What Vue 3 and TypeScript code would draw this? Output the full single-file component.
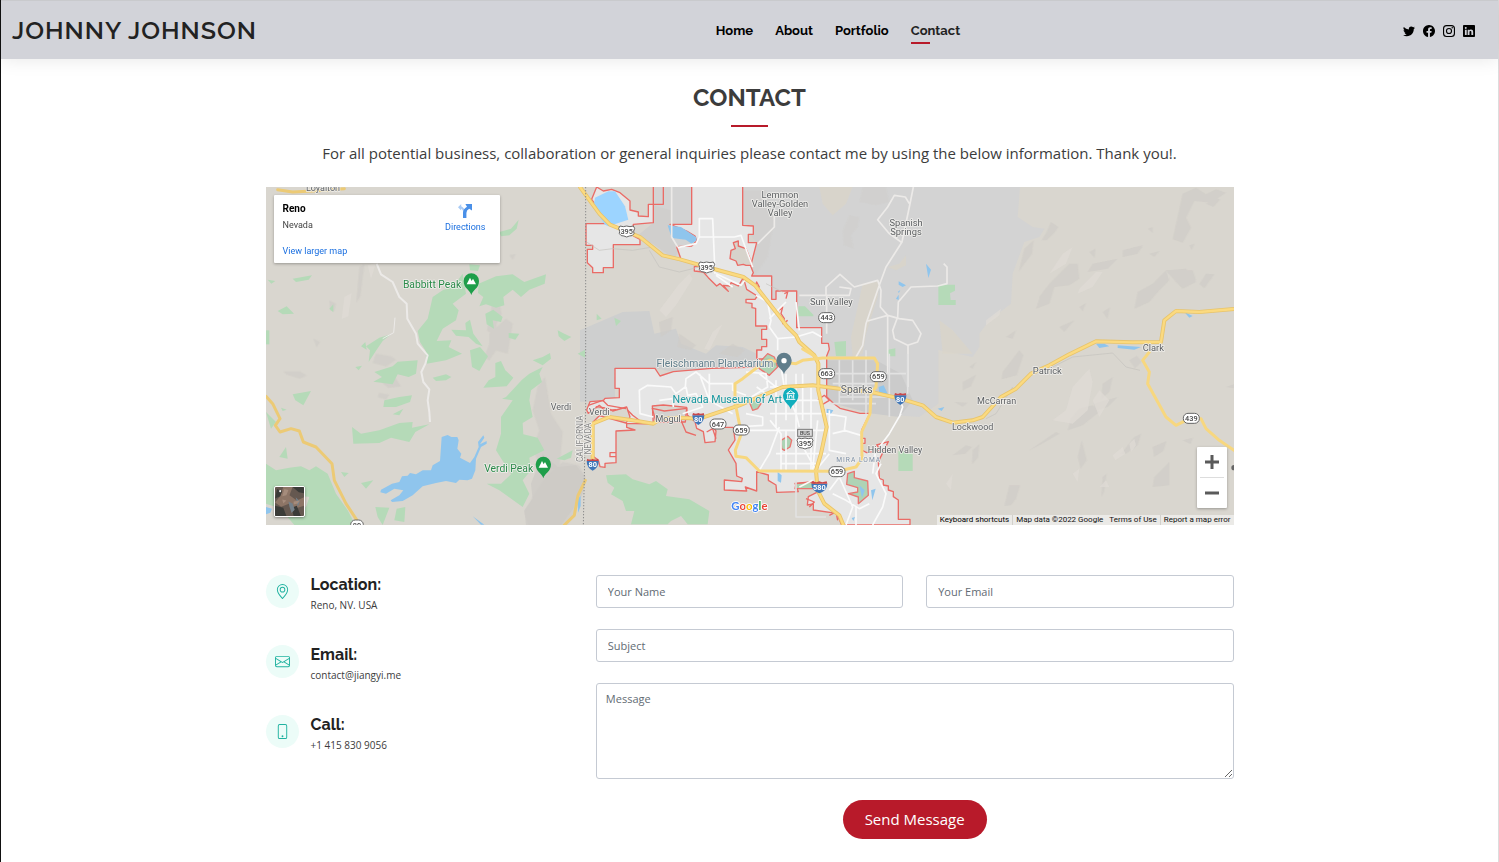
<script setup lang="ts">
import { ref } from 'vue'

interface Label { text: string; x: number; y: number; size: number; kind: string; turn?: number }
interface Shield { text: string; x: number; y: number; w: number }

const nav = ['Home', 'About', 'Portfolio', 'Contact']
const active = ref('Contact')

const form = ref({ name: '', email: '', subject: '', message: '' })

const labels: Label[] = [
  { text: 'Loyalton', x: 171, y: 13, size: 27, kind: 'town' },
  { text: 'Babbitt Peak', x: 498, y: 303, size: 31, kind: 'park' },
  { text: 'Verdi Peak', x: 728, y: 854, size: 31, kind: 'park' },
  { text: 'Verdi', x: 885, y: 670, size: 27, kind: 'town' },
  { text: 'Verdi', x: 1000, y: 684, size: 27, kind: 'town' },
  { text: 'Mogul', x: 1206, y: 704, size: 27, kind: 'town' },
  { text: 'CALIFORNIA', x: 951, y: 755, size: 25, kind: 'state', turn: -90 },
  { text: 'NEVADA', x: 976, y: 755, size: 25, kind: 'state', turn: -90 },
  { text: 'Fleischmann Planetarium', x: 1347, y: 541, size: 31, kind: 'poi' },
  { text: 'Nevada Museum of Art', x: 1384, y: 648, size: 32, kind: 'museum' },
  { text: 'Lemmon', x: 1542, y: 34, size: 28, kind: 'town' },
  { text: 'Valley-Golden', x: 1542, y: 60, size: 28, kind: 'town' },
  { text: 'Valley', x: 1542, y: 87, size: 28, kind: 'town' },
  { text: 'Spanish', x: 1920, y: 117, size: 28, kind: 'town' },
  { text: 'Springs', x: 1920, y: 144, size: 28, kind: 'town' },
  { text: 'Sun Valley', x: 1696, y: 354, size: 28, kind: 'town' },
  { text: 'Clark', x: 2662, y: 492, size: 28, kind: 'town' },
  { text: 'Sparks', x: 1772, y: 618, size: 31, kind: 'town' },
  { text: 'Hidden Valley', x: 1887, y: 798, size: 27, kind: 'town' },
  { text: 'MIRA LOMA', x: 1778, y: 824, size: 20, kind: 'district' },
  { text: 'Lockwood', x: 2120, y: 729, size: 27, kind: 'town' },
  { text: 'McCarran', x: 2192, y: 650, size: 27, kind: 'town' },
  { text: 'Patrick', x: 2344, y: 562, size: 28, kind: 'town' },
]

const stateRoutes: Shield[] = [
  { text: '443', x: 1682, y: 392, w: 48 },
  { text: '663', x: 1682, y: 560, w: 48 },
  { text: '659', x: 1837, y: 569, w: 48 },
  { text: '659', x: 1713, y: 854, w: 48 },
  { text: '659', x: 1426, y: 729, w: 48 },
  { text: '647', x: 1356, y: 711, w: 48 },
  { text: '439', x: 2776, y: 694, w: 48 },
  { text: '89', x: 273, y: 1014, w: 38 },
]
const usRoutes: Shield[] = [
  { text: '395', x: 1082, y: 133, w: 46 },
  { text: '395', x: 1322, y: 241, w: 46 },
  { text: '395', x: 1617, y: 769, w: 46 },
]
const interstates: Shield[] = [
  { text: '80', x: 1297, y: 695, w: 36 },
  { text: '80', x: 980, y: 832, w: 36 },
  { text: '80', x: 1903, y: 635, w: 36 },
  { text: '580', x: 1660, y: 900, w: 48 },
]

const woods = [
  '80,275 138,265 128,278 90,285',
  '35,372 62,358 84,380 50,382',
  '5,278 28,282 16,290',
  '190,365 202,352 202,376',
  '0,430 10,430 10,472 0,472',
  '610,232 642,235 636,252 612,250',
  '705,148 700,135 735,125 758,98 752,125 730,145',
  '590,260 560,300 530,310 500,330 485,395 455,432 462,465 478,490 482,530 540,520 588,500 548,480 556,460 512,462 530,425 570,400 578,370 560,350 600,320',
  '638,290 690,268 740,262 775,285 840,262 836,290 790,308 765,330 740,308 712,330 715,355 690,362 660,352 640,358 652,330 636,318',
  '658,380 682,368 710,390 705,405 680,400 684,425 662,412',
  '556,428 600,430 598,408 612,398 622,440 650,478 630,470 608,450 570,446',
  '728,438 760,440 748,458 728,452',
  '612,490 642,480 666,508 640,552 618,540',
  '688,528 705,522 718,550 742,572 722,598 652,602 668,580 688,570',
  '300,478 340,452 375,442 350,462 332,488 308,525 312,490',
  '285,478 298,465 302,488',
  '325,555 380,538 395,524 455,520 450,560 428,570 395,562 380,592 322,584 348,570',
  '500,572 540,562 556,570 540,580 510,582',
  '268,540 288,536 278,550',
  '355,640 400,630 438,625 432,645 390,660 352,660',
  '80,622 135,612 112,655 88,640',
  '45,662 62,668 50,672',
  '380,682 412,665 400,685',
  '258,720 285,740 340,730 400,708 440,705 438,722 490,712 448,735 430,765 375,752 340,768 262,770',
  '720,630 768,578 790,560 830,540 820,560 828,585 795,610 790,640 800,690 770,708 772,742 815,752 835,790 790,812 795,850 770,880 790,920 770,960 700,910 662,890 705,890 735,862 690,790 705,740 705,690 740,640 708,635',
  '800,520 830,510 852,498 855,515 830,535',
  '875,430 895,440 916,450 895,462 878,448',
  '935,500 957,488 957,512',
  '872,815 920,790 915,812 895,820',
  '0,830 30,850 70,842 105,838 130,850 150,838 185,860 210,920 245,970 268,1014 85,1014 60,985 120,960 130,930 60,920 30,960 0,950',
  '40,810 60,780 65,815',
  '225,855 248,858 235,870',
  '285,888 322,880 300,905',
  '328,960 370,962 350,1014 335,990',
  '392,965 418,960 415,1005 385,1000',
  '0,675 30,705 15,725',
]

const cityMain =
  'M1277 0V112H1212L1262 132 1287 147 1292 162 1277 177 1232 179 1245 217 1299 233V239H1285V252L1312 255 1327 272 1352 297 1362 290 1387 313 1372 295 1392 297 1395 287 1417 297 1432 272 1442 307 1474 327 1467 337H1440V347L1458 349 1458 362 1469 364V417H1502V427H1487V457H1502V479H1487V489H1472V540L1337 544 1222 554 1182 567 1167 544H1047V604H1060V632L1017 634 1012 641 972 644 962 669 967 679 992 659 1027 664 1040 672 1082 660 1092 690 1080 708 1000 686 982 704V809L997 819 1002 839 1017 841V829L1050 827V797H1032V809H1050V732L1107 729 1082 721V709L1162 711 1159 657 1192 654 1262 661 1264 684 1287 704 1292 724 1312 734 1317 767 1347 764 1350 732 1342 721 1402 721 1407 759 1387 789 1410 829 1412 867 1429 874 1427 884 1375 879V909L1442 912 1438 900 1472 912V854L1507 864V880L1530 894 1532 916 1597 914 1587 889 1642 884 1657 914 1627 929 1624 954 1642 951V969L1712 979 1727 1014H1932V997H1897V939L1882 929V914L1867 909V897L1852 894V879L1840 874 1837 824 1867 764 1832 774 1845 790 1802 797 1787 789V769H1797V754H1787V729L1812 679H1782L1722 664 1702 649 1682 629V507L1690 487 1687 469H1667V422H1592V312H1530V337H1517V267H1457L1462 257 1454 237 1472 167H1447V142H1462V117L1430 115V0'
const cityWest =
  'M992 0 977 37 1027 110H960V175H980V187H964V227L980 242V257H1012V242H1042V173H1122V157L1102 147V112L1162 107V52H1147V89L1117 87V75L1092 69V42L1062 17 1037 7 1012 12Z'
</script>

<template>
  <div class="page">
    <header class="header">
      <a class="logo" href="#">JOHNNY JOHNSON</a>
      <nav aria-label="Main">
        <ul class="nav">
          <li v-for="item in nav" :key="item">
            <a href="#" :class="{ active: item === active }" @click.prevent="active = item">{{ item }}</a>
          </li>
        </ul>
      </nav>
      <div class="social">
        <a href="#" aria-label="Twitter">
          <svg viewBox="0 0 16 16"><path d="M5.026 15c6.038 0 9.341-5.003 9.341-9.334 0-.14 0-.282-.006-.422A6.685 6.685 0 0 0 16 3.542a6.658 6.658 0 0 1-1.889.518 3.301 3.301 0 0 0 1.447-1.817 6.533 6.533 0 0 1-2.087.793A3.286 3.286 0 0 0 7.875 6.03a9.325 9.325 0 0 1-6.767-3.429 3.289 3.289 0 0 0 1.018 4.382A3.323 3.323 0 0 1 .64 6.575v.045a3.288 3.288 0 0 0 2.632 3.218 3.203 3.203 0 0 1-.865.115 3.23 3.23 0 0 1-.614-.057 3.283 3.283 0 0 0 3.067 2.277A6.588 6.588 0 0 1 .78 13.58a6.32 6.32 0 0 1-.78-.045A9.344 9.344 0 0 0 5.026 15z" /></svg>
        </a>
        <a href="#" aria-label="Facebook">
          <svg viewBox="0 0 16 16"><path d="M16 8.049c0-4.446-3.582-8.05-8-8.05C3.58 0-.002 3.603-.002 8.05c0 4.017 2.926 7.347 6.75 7.951v-5.625h-2.03V8.05H6.75V6.275c0-2.017 1.195-3.131 3.022-3.131.876 0 1.791.157 1.791.157v1.98h-1.009c-.993 0-1.303.621-1.303 1.258v1.51h2.218l-.354 2.326H9.25V16c3.824-.604 6.75-3.934 6.75-7.951z" /></svg>
        </a>
        <a href="#" aria-label="Instagram">
          <svg viewBox="0 0 16 16"><rect x=".75" y=".75" width="14.5" height="14.5" rx="4" fill="none" stroke="#000" stroke-width="1.5" /><circle cx="8" cy="8" r="3.4" fill="none" stroke="#000" stroke-width="1.5" /><circle cx="12.3" cy="3.7" r="1" /></svg>
        </a>
        <a href="#" aria-label="LinkedIn">
          <svg viewBox="0 0 16 16"><path d="M0 1.146C0 .513.526 0 1.175 0h13.65C15.474 0 16 .513 16 1.146v13.708c0 .633-.526 1.146-1.175 1.146H1.175C.526 16 0 15.487 0 14.854V1.146zm4.943 12.248V6.169H2.542v7.225h2.401zm-1.2-8.212c.837 0 1.358-.554 1.358-1.248-.015-.709-.52-1.248-1.342-1.248-.822 0-1.359.54-1.359 1.248 0 .694.521 1.248 1.327 1.248h.016zm4.908 8.212V9.359c0-.216.016-.432.08-.586.173-.431.568-.878 1.232-.878.869 0 1.216.662 1.216 1.634v3.865h2.401V9.25c0-2.22-1.184-3.252-2.764-3.252-1.274 0-1.845.7-2.165 1.193v.025h-.016a5.54 5.54 0 0 1 .016-.025V6.169h-2.4c.03.678 0 7.225 0 7.225h2.4z" /></svg>
        </a>
      </div>
    </header>

    <main class="container">
      <div class="title">
        <h2>CONTACT</h2>
        <p>For all potential business, collaboration or general inquiries please contact me by using the below information. Thank you!.</p>
      </div>

      <section class="map" aria-label="Map of Reno">
        <svg class="canvas" viewBox="0 0 2904 1014" preserveAspectRatio="xMidYMid slice">
          <rect width="2904" height="1014" fill="#d9d6cf" />

          <!-- built-up and shaded ground -->
          <path fill="#d3d3d3" d="M1162 0H2262L2255 90 2300 120 2335 125 2320 150 2275 165 2240 260 2235 350 2170 400 2140 440V480L2120 510 2017 489V650L1960 690 1812 679 1702 649 1682 507 1592 422V312L1517 337V267H1457L1472 167 1430 115H1277L1212 112 1292 162 1232 185 1215 217 1140 150 1162 107Z" />
          <path fill="#cecfcf" d="M942 430 1070 375 1150 372 1165 440 1230 425 1245 470 1320 500 1350 475 1430 480 1472 500V540L1337 544 1222 554 1167 544H1047V632L972 644H942Z" />
          <path fill="#cbcbcb" d="M1682 520H1830L1905 560 1940 640 1900 690 1812 679 1702 649 1682 629Z" />
          <path fill="#d0cfcd" d="M1162 55 1215 70 1218 160 1240 190 1225 215 1160 170 1110 150 1162 107Z" />
          <path fill="#d9d5c9" opacity=".8" d="M1660 0H1760L1740 50 1700 85 1670 50ZM1790 290 1840 280 1835 330 1800 440 1790 500 1760 510 1755 450ZM2020 400 2060 430 2120 500 2030 500ZM1865 240 1900 230 1920 205V235L1890 250Z" />
          <g fill="#cfccc7" opacity=".7">
            <path d="m280 240 15-8-12 95-12 20zM190 340l20 10-5 22-12-2zM142 455l20 10-10 16zM52 553h50l20 12-20 10-40-12zM330 500l45 8 15 10-30 20-40-10zM355 558l30 10 20 30-38 5-18-15zM340 618l30 5-10 15-25-8zM730 205l20-5-10 18zM680 345l15-18 12 55-12 15-10 45-22-10zM670 440l50-45 20 15-15 90-35-10-20 30-15-10 15-40zM815 600l22-30 18 110 35 55-10 110-55 0-25-60 20-55-20-60zM800 930l40-60 50-45 50 10 20 40-15 60-40 80-110 20-20-60z" />
            <path d="m1420 10 80 0 25 90-20 110-40 60-60 0-30-70zM1730 130l20-45 30 5-5 30-20 25 8 40-30-10zM1790 0h70l10 45-40 10-50-10z" opacity=".35" />
            <path d="m1180 405 40-15-5 40-30 20zM1240 440l50 35-15 15-40-10zM1360 500l40-30 35 20-20 20z" />
            <path d="m2355 105 22 15-10 15-25 25h-15l15-25zM2275 185l28-25-5 40-30 40-10 15zM2750 20l40-18 30 20 30-15 30 10-45 30-50-5-25 50 15 30-25 45-30-10zM2820 50l32-18 10 6-20 22zM2645 125l15-5v18zM2320 330l30-40 60-60 25 0 5 45-30 20-45 5-15 50-40 15 10-30zM2600 180h30l-15 15zM2470 195l18-10-2 28zM2650 200l30-8-15 18zM2770 175l15-5-8 20zM2740 250l40 0 10 30-40-5zM2615 315l45-25 40-40 10 30-30 30-30 35-45 20zM2820 260l25 2-30 42-15-12zM2440 360l20-12-10 25zM2510 375l22-14-8 35zM2380 420l45-20-30 35zM2220 450l30-20-10 25zM2570 190l60-15-15 25-45 10zM2480 230l75-15-30 30-60 10zM2700 250l60-5 30 40-40 20-20-20z" />
            <path d="m2210 555 50-65 12 15-20 60-45 12zM2110 540l20-15-10 20zM2090 585l40-22-15 35-25 12zM2065 645l40 2-15 12zM2415 695l25-30 40-10 20 20-50 40-45 15zM2510 590l30-20-10 45-25 22zM2485 650l70-20-30 30-40 12zM2590 520l22-14 15 18-20 20zM2435 810l12-50 15 60-18 25zM2565 800l40-50 20-10-10 35-35 25zM2290 790l80-55 10 5-60 35zM2120 790l20-18-4 40-18 20zM2230 895l32 0-12 40-15 20-20 2zM2665 870l45-45 0 70-50 5zM2510 870l12-10-8 55-8 15zM2060 805l40-30 18 5-20 20zM2660 780l42-18-10 30-28 18zM2880 600l24-8v12zM2750 760l30-8-6 20z" />
          </g>
          <g fill="#dfdcd5" opacity=".7">
            <path d="m235 330 22-12-10 70-20 8zM305 235l25-8-15 50zM1180 370l60-80 30-30 10 15-50 80-30 35zM1370 410l-40 80-15-5 25-50zM2350 260l40-60 30-20-20 50zM2440 305l50-50 20 0-30 45-45 20zM2160 400l45-35-5 20-40 30zM2420 600l50-55 10 40-15 85-45 40-60-10 40-30zM2480 640l20-30 30 30-30 50zM2590 770l15-15 5 20-15 20zM2420 860l20-15-5 40zM2500 900l20-20 10 20zM2040 890l20-30-5 50zM2540 805l30-25 8 20-30 20z" />
          </g>

          <!-- forest -->
          <g fill="#b5dab8">
            <polygon v-for="(points, i) in woods" :key="'w' + i" :points="points" />
            <path d="m992 380 15 15-15 5zM1045 392l20 10-15 15z" />
            <path d="m1020 865 60-3 20 15 50 15 20-10 35 25-5 20 70 10 60 35-5 40-60 0-20-25-30 15-10 10h-110l10-40-25 0-10-30-35-20 10-20-20-15zM1070 910l60 10-10 30-60-20z" />
            <path d="m1300 185 30-5 18 15-5 28-40-5zM1360 130l20-5 5 12-20 8zM1597 358h20l25 25v5h-45zM2017 293h50v18l-15 8 2 20 15 0v15h-52zM1705 465l35-3v45h-30zM1866 488l22-4v24h-22zM1897 792h43v60h-43zM1710 488h30v20h-28z" />
            <path d="m1530 870 20-20 15 0 0 30-20 15zM1740 860l30 10 20 20 40-10 25 30-40 30-60 10-30-40z" opacity=".8" />
          </g>
          <path fill="#ccc9c5" opacity=".7" d="M830 800 875 840 930 835 958 870 950 920 925 960 885 1014H780L775 970 800 935 795 890Z" />

          <!-- city limits -->
          <g fill="#e6e6e6" stroke="#ea6b66" stroke-width="4" stroke-linejoin="round">
            <path :d="cityWest" />
            <path :d="cityMain" />
            <path fill="none" d="M1162 0V52H1192V0M1472 489V516H1512L1520 530 1542 540" />
            <path fill="#d7d3cb" d="M1402 167 1417 162 1417 177 1440 185 1450 210 1458 235 1440 235 1432 232 1415 235 1410 222 1392 215 1395 190 1408 185Z" />
            <path fill="#d3d2d0" d="M1159 664 1195 672 1262 664 1258 705 1170 705Z" />
            <path fill="#a9d2b0" d="M1545 760 1565 748 1577 760 1572 780 1555 790 1547 785ZM1452 650 1465 635 1485 650 1475 665 1460 670ZM1745 860 1765 853 1765 872 1805 882 1807 925 1777 950 1777 930 1747 920 1775 915 1775 902 1742 892ZM1472 535 1505 500 1525 510 1535 540 1510 565 1480 545ZM1590 890 1642 885 1642 905 1587 905Z" opacity=".9" />
            <path fill="none" d="M967 655 1010 640 1025 655 1080 665M980 670 1000 655 1015 670 1050 668M1085 670 1100 685 1120 700 1150 710M1245 700 1260 735 1290 745M1322 735 1340 725 1350 755M1655 640 1675 625 1690 640 1665 655 1675 670M1620 935 1645 945 1630 960M1690 985 1710 975 1715 1000M1540 370 1550 360 1545 380 1555 395 1550 410 1565 400M1555 320 1565 315 1560 335M1472 285 1480 300 1468 297Z" />
          </g>

          <!-- water -->
          <g fill="#8fc5ed">
            <path fill="#9cd4ff" d="m987 32 40-19 20 0 30 45 10 40-60 20-10-5-35-50z" />
            <path d="m1205 115 40 5 45 30 2 10-15 10-18-12-42-5z" />
            <path d="M527 750 545 744 556 750 574 750 578 760 574 785 586 800 582 812 612 828 625 810 638 780 636 765 652 745 655 752 642 772 662 762 662 770 645 780 630 815 628 850 618 875 605 880 580 878 570 888 540 882 510 888 470 898 440 925 410 942 378 945 374 940 400 925 412 910 385 905 360 920 343 916 345 908 378 890 400 885 408 868 425 866 432 858 450 862 470 850 495 850 500 835 522 822Z" />
            <path d="m0 960 18 5-5 12-13 5zM620 988l35 25-10 0zM936 935l8-8 0 30-8 20zM1980 230l15 18-8 25zM1898 283l22 12-10 5-12-7zM1890 335l8-12v16zM1895 315l8-6-4 8zM1682 665l20 5-10 15-10-3zM1838 600l15-5 12 25-25 10zM1535 855l12 10-2 22-10-5zM1780 895l16 15-8 22zM1815 910l14-5-10 35zM1757 993l10-3-5 12zM2755 375l25 12-10 5zM2490 470l25 0 15 8-30 5zM2555 475l70 5-20 8-50-5zM2015 665l20-5-8 12z" />
          </g>

          <!-- minor roads -->
          <g fill="none" stroke="#c4c2be" stroke-width="2">
            <path d="M962 165 1000 190 1040 185 1100 190 1160 180M1150 190 1180 240 1240 255 1300 240M2350 545 2420 510 2540 498 2580 540 2622 550M2160 695 2190 680 2240 600M1500 290 1550 315" />
          </g>
          <g fill="none" stroke="#eceae8" stroke-width="6" stroke-linejoin="round">
            <path d="M332 230 345 262 380 285 400 330 422 350 424 395 450 440 455 470 485 505 478 530 466 555 472 585 490 607 485 640 490 675 492 705" />
            <path stroke-width="3" d="M387 392 383 437 350 455" />
            <path stroke-width="5" d="M1942 0 1930 60 1908 165 1860 240 1838 300 1800 410 1790 475 1770 510M1930 50 1918 30 1885 25 1865 60 1835 98 1845 110 1870 140 1905 165M1600 325H1680V300L1722 262 1765 300 1835 280 1845 310 1843 360 1865 385 1900 395 1940 400 1965 440 1955 465 1925 475 1885 455 1880 430 1895 390 1897 345 1935 300 2015 297 2043 290 2043 240 2033 230M1865 385V560M1805 402 1865 385M1926 475V600M1682 325V440M1720 300 1755 305 1750 325 1682 325M1217 0V150L1235 180M1525 50V120L1475 170" />
          </g>
          <g fill="none" stroke="#fafafa" stroke-width="5" stroke-linejoin="round">
            <path d="M1300 150V95H1340L1347 260M1300 150 1405 150 1425 145 1445 200 1460 240M1235 182 1290 170 1300 150M1350 260 1425 295 1440 275M1470 325 1505 345 1515 400 1510 420 1535 455 1535 490M1510 395 1560 345M1535 455 1590 450 1640 435 1667 450M1590 345 1600 430M1350 265 1400 300" />
            <path d="M1162 690 1122 680 1120 610 1145 595 1215 600 1230 620 1258 600 1260 575 1290 555 1330 590 1400 590 1400 610 1440 625M1260 600 1265 625 1290 620 1310 660 1250 680M1180 640 1220 635 1222 660M1300 560 1330 640 1400 680M1440 555 1500 560 1505 600 1440 640M1330 640V560M1480 560 1530 600 1560 600M1410 720 1490 715 1490 690 1440 680M1430 730H1512M1540 720 1510 800 1480 850M1472 600 1500 620" />
            <path d="M1545 540 1555 600 1590 680 1600 720M1512 600H1680M1530 580V720M1560 560V700M1590 560V850M1610 560V700M1635 590V850M1655 700 1640 850M1512 640H1670M1512 680H1670M1512 730H1680M1530 800H1680M1545 830H1650M1560 730V850M1600 760 1650 850 1690 800M1512 700 1545 740 1545 850M1680 680 1740 690 1735 730 1785 745M1690 670V790L1740 800M1740 730 1700 740M1600 900 1640 880M1690 910 1720 870 1760 960 1740 1014M1845 830 1830 860 1860 920 1850 960 1820 1014M1700 920 1740 940 1780 965 1810 950M1770 960 1770 1014M1900 690 1910 660 1895 620M1905 680 1870 740 1840 780M1830 780 1820 860" />
            <path stroke="#e2e2e2" d="M1700 560H1920M1720 520V650M1760 520V640M1800 490V680M1870 500V690M1700 590H1830M1720 630H1900M1925 500V620M1690 650H1830M1590 880V990H1680" />
          </g>

          <!-- highways -->
          <g fill="none" stroke-linejoin="round" stroke-linecap="round">
            <path stroke="#ecca75" stroke-width="9" d="M0 628 20 650 42 695 28 715 42 735 75 725 100 732 112 765 150 780 198 830 205 880 240 950 273 1000M35 8 80 15 140 12 235 5M958 880 936 925 925 985 895 1014" />
            <g stroke="#e8c46a" stroke-width="12">
              <path d="M942 0 1000 80 1032 113 1122 150 1190 205 1242 217 1322 240 1432 270 1467 295 1542 390 1562 417 1590 445 1600 465 1645 505 1657 530 1657 610 1682 720 1665 800 1650 850 1655 910 1675 950 1720 985 1732 1014" />
              <path d="M980 830V710L1030 690 1100 700 1162 710 1185 695 1240 692 1300 695 1420 655 1550 600 1640 595 1720 605 1815 615 1903 635 1970 655 2010 690 2060 707 2120 700 2150 690 2205 630 2250 605 2295 560 2350 535 2410 502 2490 463 2600 466 2685 465 2695 400 2730 372 2800 375 2904 366" />
            </g>
            <g stroke="#fbda80" stroke-width="7">
              <path d="M942 0 1000 80 1032 113 1122 150 1190 205 1242 217 1322 240 1432 270 1467 295 1542 390 1562 417 1590 445 1600 465 1645 505 1657 530 1657 610 1682 720 1665 800 1650 850 1655 910 1675 950 1720 985 1732 1014" />
              <path d="M980 830V710L1030 690 1100 700 1162 710 1185 695 1240 692 1300 695 1420 655 1550 600 1640 595 1720 605 1815 615 1903 635 1970 655 2010 690 2060 707 2120 700 2150 690 2205 630 2250 605 2295 560 2350 535 2410 502 2490 463 2600 466 2685 465 2695 400 2730 372 2800 375 2904 366" />
            </g>
            <g stroke="#f7d77f" stroke-width="9">
              <path d="M1407 650V590L1430 575 1475 540 1510 520 1590 530 1610 520 1670 513 1825 513 1835 530 1830 600 1815 620 1812 680 1787 735 1788 815 1770 840 1715 853 1512 852 1480 852 1440 812 1410 808 1408 790 1426 740 1410 660M1610 486 1650 510" />
              <path d="M2650 495 2630 520 2650 555 2645 590 2700 690 2730 715 2770 695 2805 695 2820 725 2860 760 2904 790" />
            </g>
          </g>
          <path d="M959 0V675L952 1014" fill="none" stroke="#8b8b8b" stroke-width="3" stroke-dasharray="4 5" />

          <!-- route shields -->
          <g v-for="(s, i) in stateRoutes" :key="'s' + i">
            <rect :x="s.x - s.w / 2" :y="s.y - 15" :width="s.w" height="30" rx="14" fill="#fff" stroke="#666" stroke-width="3" />
            <text class="shield" :x="s.x" :y="s.y + 8">{{ s.text }}</text>
          </g>
          <rect x="1595" y="727" width="44" height="21" fill="#ddd" stroke="#777" stroke-width="3" />
          <text class="shield small" x="1617" y="744">BUS</text>
          <g v-for="(s, i) in usRoutes" :key="'u' + i">
            <path :transform="`translate(${s.x} ${s.y})`" fill="#fff" stroke="#666" stroke-width="3" d="M-20-16Q-10-12 0-16 10-12 20-16L24-9Q19 0 22 7 18 15 8 14L0 17-8 14Q-18 15-22 7-19 0-24-9Z" />
            <text class="shield" :x="s.x" :y="s.y + 8">{{ s.text }}</text>
          </g>
          <g v-for="(s, i) in interstates" :key="'i' + i">
            <g :transform="`translate(${s.x} ${s.y})`">
              <path fill="#3f76b8" :d="`M${-s.w / 2}-10Q${-s.w / 2} 10 0 19 ${s.w / 2} 10 ${s.w / 2}-10Z`" />
              <path fill="#c8474a" :d="`M${-s.w / 2 + 2}-17Q-7-12 0-17 7-12 ${s.w / 2 - 2}-17L${s.w / 2}-10H${-s.w / 2}Z`" />
            </g>
            <text class="shield white" :x="s.x" :y="s.y + 9">{{ s.text }}</text>
          </g>

          <!-- place names -->
          <text
            v-for="(l, i) in labels"
            :key="'l' + i"
            :class="['label', l.kind]"
            :font-size="l.size"
            :transform="`translate(${l.x} ${l.y}) rotate(${l.turn ?? 0})`"
          >{{ l.text }}</text>

          <!-- pins -->
          <g fill="#1e9e4a">
            <path d="M616 324C612 308 593 305 593 282A23 23 0 0 1 639 282C639 305 620 308 616 324Z" />
            <path fill="#fff" d="M602 292 612 272 617 282 621 275 630 292Z" />
            <path d="M832 874C828 858 809 855 809 832A23 23 0 0 1 855 832C855 855 836 858 832 874Z" />
            <path fill="#fff" d="M818 842 828 822 833 832 837 825 846 842Z" />
          </g>
          <path fill="#607d8b" d="M1554 562C1550 546 1531 542 1531 520A23 23 0 0 1 1577 520C1577 542 1558 546 1554 562Z" />
          <circle cx="1554" cy="521" r="8" fill="#fff" />
          <path fill="#12aebd" d="M1574 667C1570 651 1551 647 1551 625A23 23 0 0 1 1597 625C1597 647 1578 651 1574 667Z" />
          <path fill="none" stroke="#fff" stroke-width="3" d="M1562 620 1574 611 1586 620ZM1565 622V635M1583 622V635M1560 637H1588M1570 634V626H1578V634" />
          <circle cx="2904" cy="842" r="8" fill="#666" />

          <text class="google" x="1396" y="968"><tspan fill="#4285f4">G</tspan><tspan fill="#ea4335">o</tspan><tspan fill="#fbbc05">o</tspan><tspan fill="#4285f4">g</tspan><tspan fill="#34a853">l</tspan><tspan fill="#ea4335">e</tspan></text>
        </svg>

        <div class="place">
          <div class="place-text">
            <strong>Reno</strong>
            <span>Nevada</span>
            <a href="#">View larger map</a>
          </div>
          <a class="directions" href="#">
            <svg viewBox="0 0 14 15"><path fill="#a9cbf5" d="M0 3.2 3.2 0V2.2Q6.6 4 7 8L5.5 9Q5 5.5 3.2 4.6V6.4Z" transform="translate(0 1)" /><path fill="#4a90e8" d="M5 15V9.5Q5.2 6 9 3.7L7.4 1H14V7.4L11.2 5.8Q8.4 7.4 8.4 10V15Z" /></svg>
            Directions
          </a>
        </div>

        <button class="satellite" type="button" aria-label="Show satellite imagery">
          <svg viewBox="0 0 28 28"><rect width="28" height="28" fill="#655850" /><path fill="#8d7566" d="m8 0 9 0-3 8 7 5 7-3v8l-9 3-5-5-8 3-6-4 5-6z" /><path fill="#3b3b38" d="m0 18 8 2 3 8H0zM17 0l6 5 5 1V0zM2 2l5 2-2 5-5 2zM16 20l5-2 4 10h-7z" /><path fill="#75818a" d="m13 14 4 2 2 6-3 3-2-6zM20 10l4 4-2 5z" /><path fill="#a58c7c" d="m9 2 4 1-2 5-4 1zM18 14l6-1-2 3-4 1zM7 12l4 1-3 3z" /><circle cx="5" cy="4" r="1" fill="#eee" /></svg>
        </button>

        <div class="zoom">
          <button type="button" aria-label="Zoom in"><svg viewBox="0 0 14 14"><path d="M5.5 0h3v5.5H14v3H8.5V14h-3V8.5H0v-3h5.5z" /></svg></button>
          <button type="button" aria-label="Zoom out"><svg viewBox="0 0 14 14"><path d="M0 5.5h14v3H0z" /></svg></button>
        </div>

        <div class="legal">
          <button type="button">Keyboard shortcuts</button>
          <span>Map data ©2022 Google</span>
          <a href="#">Terms of Use</a>
          <a class="split" href="#">Report a map error</a>
        </div>
      </section>

      <section class="details">
        <div class="info">
          <div class="item">
            <span class="icon"><svg viewBox="0 0 16 16"><path d="M12.166 8.94c-.524 1.062-1.234 2.12-1.96 3.07A31.493 31.493 0 0 1 8 14.58a31.481 31.481 0 0 1-2.206-2.57c-.726-.95-1.436-2.008-1.96-3.07C3.304 7.867 3 6.862 3 6a5 5 0 0 1 10 0c0 .862-.305 1.867-.834 2.94zM8 16s6-5.686 6-10A6 6 0 0 0 2 6c0 4.314 6 10 6 10z" /><path d="M8 8a2 2 0 1 1 0-4 2 2 0 0 1 0 4zm0 1a3 3 0 1 0 0-6 3 3 0 0 0 0 6z" /></svg></span>
            <div><h4>Location:</h4><p>Reno, NV. USA</p></div>
          </div>
          <div class="item">
            <span class="icon"><svg viewBox="0 0 16 16"><path d="M0 4a2 2 0 0 1 2-2h12a2 2 0 0 1 2 2v8a2 2 0 0 1-2 2H2a2 2 0 0 1-2-2V4Zm2-1a1 1 0 0 0-1 1v.217l7 4.2 7-4.2V4a1 1 0 0 0-1-1H2Zm13 2.383-4.708 2.825L15 11.105V5.383Zm-.034 6.876-5.64-3.471L8 9.583l-1.326-.795-5.64 3.47A1 1 0 0 0 2 13h12a1 1 0 0 0 .966-.741ZM1 11.105l4.708-2.897L1 5.383v5.722Z" /></svg></span>
            <div><h4>Email:</h4><p>contact@jiangyi.me</p></div>
          </div>
          <div class="item">
            <span class="icon"><svg viewBox="0 0 16 16"><path d="M11 1a1 1 0 0 1 1 1v12a1 1 0 0 1-1 1H5a1 1 0 0 1-1-1V2a1 1 0 0 1 1-1h6zM5 0a2 2 0 0 0-2 2v12a2 2 0 0 0 2 2h6a2 2 0 0 0 2-2V2a2 2 0 0 0-2-2H5z" /><path d="M8 14a1 1 0 1 0 0-2 1 1 0 0 0 0 2z" /></svg></span>
            <div><h4>Call:</h4><p>+1 415 830 9056</p></div>
          </div>
        </div>

        <form class="form" @submit.prevent>
          <input v-model="form.name" type="text" placeholder="Your Name" aria-label="Your Name" />
          <input v-model="form.email" type="email" placeholder="Your Email" aria-label="Your Email" />
          <input v-model="form.subject" class="wide" type="text" placeholder="Subject" aria-label="Subject" />
          <textarea v-model="form.message" class="wide" placeholder="Message" aria-label="Message"></textarea>
          <button class="wide" type="submit">Send Message</button>
        </form>
      </section>
    </main>
  </div>
</template>

<style>
body {
  margin: 0;
  background: #fff;
}
</style>

<style scoped>
* {
  box-sizing: border-box;
}
.page {
  min-height: 100vh;
  border-left: 1px solid #111;
  border-right: 1px solid #ddd;
  font-family: "Open Sans", sans-serif;
  color: #3c3c3c;
}
a {
  color: inherit;
  text-decoration: none;
}
button {
  font: inherit;
  border: 0;
  padding: 0;
  cursor: pointer;
}
svg {
  display: block;
}
.header {
  display: flex;
  align-items: center;
  justify-content: space-between;
  height: 59px;
  padding: 0 23px 0 11px;
  background: #d2d3d9;
  border-top: 1px solid #c9cacd;
  box-shadow: 0 0 18px rgba(0, 0, 0, 0.1);
}
.logo {
  font: 600 25px/30px Raleway, Lato, sans-serif;
  letter-spacing: 1px;
  color: #222;
}
.nav {
  display: flex;
  margin: 0;
  padding: 2px 6px 0 0;
  list-style: none;
}
.nav li {
  padding-left: 22px;
}
.nav a {
  display: block;
  position: relative;
  padding: 6px 0;
  font: 700 13px/18px Raleway, Inter, sans-serif;
  color: #000;
}
.nav a.active {
  color: #222;
}
.nav a.active::after {
  content: "";
  position: absolute;
  left: 0;
  bottom: 2px;
  width: 19px;
  height: 2px;
  background: #b81a2a;
}
.social {
  display: flex;
  gap: 8px;
}
.social svg {
  width: 12px;
  height: 12px;
  margin-top: 2px;
}
.container {
  max-width: 968px;
  margin: 0 auto;
}
.title {
  padding-top: 23px;
  text-align: center;
}
.title h2 {
  margin: 0;
  font: 700 24px/32px Raleway, Lato, sans-serif;
  color: #3c3c3c;
}
.title h2::after {
  content: "";
  display: block;
  width: 37px;
  height: 2px;
  margin: 11px auto 0;
  background: #b81a2a;
}
.title p {
  margin: 15px 0 22px;
  font-size: 15px;
  line-height: 23px;
}
.map {
  position: relative;
  height: 338px;
  overflow: hidden;
  font-family: Roboto, sans-serif;
}
.canvas {
  width: 100%;
  height: 100%;
}
.label {
  font-family: Roboto, sans-serif;
  text-anchor: middle;
  fill: #5d6063;
  stroke: #f0efec;
  stroke-width: 5px;
  stroke-linejoin: round;
  paint-order: stroke;
}
.label.park {
  fill: #2a8a49;
}
.label.poi {
  fill: #607d8b;
}
.label.museum {
  fill: #1796a0;
}
.label.state {
  fill: #868686;
}
.label.district {
  fill: #7c8ea6;
  letter-spacing: 3px;
}
.shield {
  font: 500 22px Roboto, sans-serif;
  text-anchor: middle;
  fill: #444;
}
.shield.small {
  font-size: 16px;
}
.shield.white {
  font-weight: 700;
  fill: #fff;
}
.google {
  font: 700 34px Lato, sans-serif;
  stroke: #fff;
  stroke-width: 5px;
  paint-order: stroke;
}
.place {
  position: absolute;
  top: 8px;
  left: 8px;
  display: flex;
  justify-content: space-between;
  width: 226px;
  height: 68px;
  padding: 8px 14px 0 9px;
  background: #fff;
  border-radius: 1px;
  box-shadow: 0 1px 3px rgba(0, 0, 0, 0.3);
  font-size: 9px;
  line-height: 11px;
}
.place-text {
  display: flex;
  flex-direction: column;
}
.place strong {
  font-size: 10px;
  font-weight: 700;
  color: #000;
}
.place span {
  margin: 6px 0 15px;
  color: #444;
}
.place a {
  color: #1a6fe0;
}
.directions {
  display: flex;
  flex-direction: column;
  align-items: center;
  gap: 4px;
}
.directions svg {
  width: 14px;
  height: 15px;
}
.satellite {
  position: absolute;
  left: 8px;
  bottom: 8px;
  width: 31px;
  height: 31px;
  border: 1px solid #fff;
  border-radius: 2px;
  overflow: hidden;
  box-shadow: 0 1px 3px rgba(0, 0, 0, 0.4);
}
.satellite svg {
  width: 29px;
  height: 29px;
}
.zoom {
  position: absolute;
  right: 7px;
  bottom: 17px;
  width: 30px;
  padding: 0 3px;
  background: #fff;
  border-radius: 1px;
  box-shadow: 0 1px 3px rgba(0, 0, 0, 0.3);
}
.zoom button {
  display: grid;
  place-items: center;
  width: 24px;
  height: 30px;
  background: none;
}
.zoom button + button {
  height: 31px;
  border-top: 1px solid #ddd;
}
.zoom svg {
  width: 14px;
  height: 14px;
  fill: #5a5a5a;
}
.legal {
  position: absolute;
  right: 0;
  bottom: 0;
  display: flex;
  font-size: 8px;
  line-height: 10px;
  color: #111;
}
.legal > * {
  padding: 0 3px;
  background: #ebeae7;
}
.legal button + span,
.legal .split {
  border-left: 1px solid #d2d0cb;
}
.details {
  display: grid;
  grid-template-columns: repeat(3, 1fr);
  gap: 23px;
  padding-top: 50px;
}
.item {
  display: flex;
  gap: 12px;
  height: 70px;
}
.icon {
  display: grid;
  place-items: center;
  width: 33px;
  height: 33px;
  border-radius: 50%;
  background: #ecfcf8;
}
.icon svg {
  width: 15px;
  height: 15px;
  fill: #20b2a0;
}
.item h4 {
  margin: 0;
  font: 700 16px/20px Raleway, Lato, sans-serif;
  color: #222;
}
.item p {
  margin: 2px 0 0;
  font-size: 10px;
  line-height: 17px;
}
.form {
  grid-column: span 2;
  display: grid;
  grid-template-columns: 1fr 1fr;
  gap: 21px 23px;
}
.wide {
  grid-column: 1 / -1;
}
.form input,
.form textarea {
  width: 100%;
  height: 33px;
  padding: 0 11px;
  border: 1px solid #c5cad3;
  border-radius: 3px;
  background: #fff;
  font: 11px/16px "Open Sans", sans-serif;
  color: #333;
}
.form textarea {
  display: block;
  height: 96px;
  padding: 7px 9px;
  resize: vertical;
}
.form ::placeholder {
  color: #626b73;
  opacity: 1;
}
.form button {
  justify-self: center;
  height: 39px;
  padding: 0 22px 2px;
  border-radius: 20px;
  background: #b81a2a;
  color: #fff;
  font-size: 15px;
}
</style>
